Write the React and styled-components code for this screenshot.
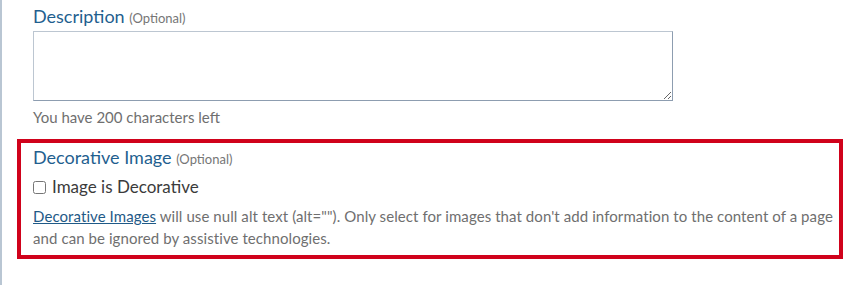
import React from "react";
import styled, { createGlobalStyle } from "styled-components";

const Global = createGlobalStyle`
  html, body { margin: 0; padding: 0; background: #fff; }
  body { font-family: Lato, "Open Sans", sans-serif; }
`;

const Page = styled.div`
  min-height: 285px;
  border-left: 2px solid #b9c6d3;
  padding: 5px 0 0 15px;
  box-sizing: border-box;
`;

const Field = styled.div`
  padding-left: 16px;
  display: flex;
  flex-direction: column;
`;

const Label = styled.label`
  display: block;
  font-size: 18px;
  line-height: 22px;
  color: #1f5f8f;
`;

const Optional = styled.span`
  font-size: 13px;
  line-height: 1;
  color: #767676;
`;

const TextArea = styled.textarea`
  display: block;
  margin-top: 4px;
  width: 640px;
  height: 70px;
  box-sizing: border-box;
  border: 1px solid;
  border-color: #bcc6d1 #8d9db0 #8d9db0 #bcc6d1;
  resize: vertical;
  font-family: inherit;
`;

const Helper = styled.div`
  margin-top: 6px;
  font-size: 15px;
  line-height: 20px;
  color: #6f6f6f;
`;

const Highlight = styled.div`
  margin-top: 12px;
  width: 826px;
  box-sizing: border-box;
  border: 4px solid #d0021b;
  padding: 3px 0 6px 12px;
`;

const CheckRow = styled.label`
  display: flex;
  align-items: center;
  gap: 6px;
  margin-top: 7px;
  font-size: 17px;
  line-height: 24px;
  color: #3b3b3b;
`;

const Box = styled.input`
  margin: 0;
  width: 13px;
  height: 13px;
`;

const Note = styled.p`
  margin: 6px 0 0;
  font-size: 15px;
  line-height: 22px;
  letter-spacing: 0.08px;
  white-space: nowrap;
  color: #6f6f6f;
`;

const Link = styled.a`
  color: #1f5a87;
  text-decoration: underline;
`;

export default function App() {
  return (
    <>
      <Global />
      <Page>
        <Field>
          <Label>
            Description <Optional>(Optional)</Optional>
          </Label>
          <TextArea aria-label="Description" />
          <Helper>You have 200 characters left</Helper>
        </Field>
        <Highlight>
          <Label>
            Decorative Image <Optional>(Optional)</Optional>
          </Label>
          <CheckRow>
            <Box type="checkbox" />
            Image is Decorative
          </CheckRow>
          <Note>
            <Link href="#">Decorative Images</Link> will use null alt text (alt=""). Only select for images that don't add information to the content of a page
            <br />
            and can be ignored by assistive technologies.
          </Note>
        </Highlight>
      </Page>
    </>
  );
}
